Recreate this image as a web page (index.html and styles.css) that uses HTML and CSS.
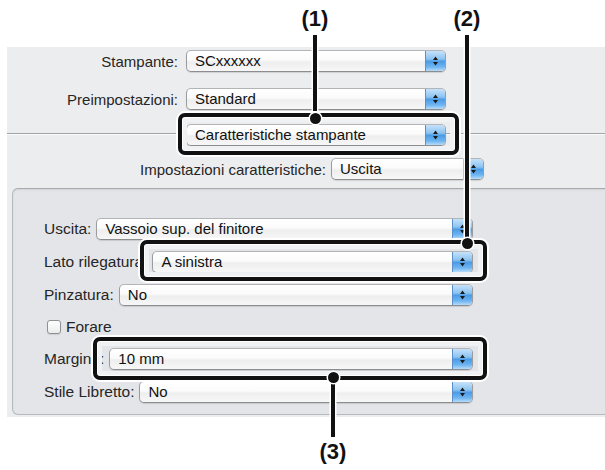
FILE: index.html
```html
<!DOCTYPE html>
<html>
  <head>
    <title>Stampa - Caratteristiche stampante</title>
    <link rel="stylesheet" href="styles.css">
  </head>
  <body>
    <div class="figure">
      <div class="dialog">
        <div class="top-field first">
          <span class="top-label">Stampante:</span>
          <div class="popup top-popup">
            <span class="popup-text">SCxxxxxx</span>
            <span class="stepper"><svg viewBox="0 0 19 20" width="19" height="20"><path d="M9.5 5.5 L12 9 L7 9 Z M7 11 L12 11 L9.5 14.5 Z"/></svg></span>
          </div>
        </div>
        <div class="top-field">
          <span class="top-label">Preimpostazioni:</span>
          <div class="popup top-popup">
            <span class="popup-text">Standard</span>
            <span class="stepper"><svg viewBox="0 0 19 20" width="19" height="20"><path d="M9.5 5.5 L12 9 L7 9 Z M7 11 L12 11 L9.5 14.5 Z"/></svg></span>
          </div>
        </div>
        <div class="top-field separator-row">
          <span class="top-label"></span>
          <div class="popup top-popup">
            <span class="popup-text">Caratteristiche stampante</span>
            <span class="stepper"><svg viewBox="0 0 19 20" width="19" height="20"><path d="M9.5 5.5 L12 9 L7 9 Z M7 11 L12 11 L9.5 14.5 Z"/></svg></span>
          </div>
        </div>
        <div class="feature-field">
          <span class="feature-label">Impostazioni caratteristiche:</span>
          <div class="popup feature-popup">
            <span class="popup-text">Uscita</span>
            <span class="stepper"><svg viewBox="0 0 19 20" width="19" height="20"><path d="M9.5 5.5 L12 9 L7 9 Z M7 11 L12 11 L9.5 14.5 Z"/></svg></span>
          </div>
        </div>

        <div class="group">
          <div class="row">
            <span class="row-label">Uscita:</span>
            <div class="popup">
              <span class="popup-text">Vassoio sup. del finitore</span>
              <span class="stepper"><svg viewBox="0 0 19 20" width="19" height="20"><path d="M9.5 5.5 L12 9 L7 9 Z M7 11 L12 11 L9.5 14.5 Z"/></svg></span>
            </div>
          </div>
          <div class="row">
            <span class="row-label">Lato rilegatura:</span>
            <div class="popup">
              <span class="popup-text">A sinistra</span>
              <span class="stepper"><svg viewBox="0 0 19 20" width="19" height="20"><path d="M9.5 5.5 L12 9 L7 9 Z M7 11 L12 11 L9.5 14.5 Z"/></svg></span>
            </div>
          </div>
          <div class="row">
            <span class="row-label">Pinzatura:</span>
            <div class="popup">
              <span class="popup-text">No</span>
              <span class="stepper"><svg viewBox="0 0 19 20" width="19" height="20"><path d="M9.5 5.5 L12 9 L7 9 Z M7 11 L12 11 L9.5 14.5 Z"/></svg></span>
            </div>
          </div>
          <label class="row check-row">
            <span class="checkbox"></span>
            <span class="row-label">Forare</span>
          </label>
          <div class="row">
            <span class="row-label">Margine:</span>
            <div class="popup">
              <span class="popup-text">10 mm</span>
              <span class="stepper"><svg viewBox="0 0 19 20" width="19" height="20"><path d="M9.5 5.5 L12 9 L7 9 Z M7 11 L12 11 L9.5 14.5 Z"/></svg></span>
            </div>
          </div>
          <div class="row">
            <span class="row-label">Stile Libretto:</span>
            <div class="popup">
              <span class="popup-text">No</span>
              <span class="stepper"><svg viewBox="0 0 19 20" width="19" height="20"><path d="M9.5 5.5 L12 9 L7 9 Z M7 11 L12 11 L9.5 14.5 Z"/></svg></span>
            </div>
          </div>
        </div>
      </div>

      <!-- callouts drawn over the dialog -->
      <span class="callout-num num-1">(1)</span>
      <span class="callout-num num-2">(2)</span>
      <span class="callout-num num-3">(3)</span>
      <span class="leader leader-1"></span>
      <span class="leader leader-2"></span>
      <span class="leader leader-3"></span>
      <span class="frame frame-1"></span>
      <span class="frame frame-2"></span>
      <span class="frame frame-3"></span>
      <span class="dot dot-1"></span>
      <span class="dot dot-2"></span>
      <span class="dot dot-3"></span>
    </div>
  </body>
</html>
```

FILE: styles.css
```css
/* Mac print dialog, "Caratteristiche stampante" pane */
body {
  margin: 0;
  background: #fff;
  font-family: "Liberation Sans", Arial, sans-serif;
  font-size: 15px;
  color: #1a1a1a;
}
.figure {
  position: relative;
  width: 605px;
  height: 470px;
  overflow: hidden;
}
.dialog {
  margin: 47px 0 0 7px;
  width: 598px;
  height: 370px;
  padding-top: 3px;
  box-sizing: border-box;
  background: #ecedef;
  overflow: hidden;
}

/* top part */
.top-field {
  display: flex;
  align-items: center;
  gap: 8px;
  height: 22px;
  margin-top: 16px;
}
.top-field.first {
  margin-top: 0;
}
.top-label {
  width: 171px;
  text-align: right;
  color: #262626;
}
.top-popup {
  width: 260px;
}
.separator-row {
  margin-top: 13px;
  height: 23px;
  background: linear-gradient(to bottom, transparent 10px, #a2a3a5 10px, #a2a3a5 11px, #fbfbfb 11px, #fbfbfb 12px, transparent 12px);
}
.feature-field {
  display: flex;
  align-items: center;
  gap: 5px;
  height: 22px;
  margin-top: 12px;
}
.feature-label {
  width: 319px;
  text-align: right;
  color: #262626;
}
.feature-popup {
  width: 153px;
}

/* popup buttons */
.popup {
  display: flex;
  align-items: stretch;
  height: 22px;
  box-sizing: border-box;
  border: 1px solid #9b9c9e;
  border-top-color: #b3b4b6;
  border-bottom-color: #8c8d8f;
  border-radius: 5px;
  overflow: hidden;
  background: linear-gradient(to bottom, #ffffff 0%, #fbfbfb 45%, #eeeeee 55%, #f7f7f7 100%);
  box-shadow: 0 1px 1px rgba(0, 0, 0, 0.12);
}
.popup-text {
  flex: 1;
  padding-left: 8px;
  line-height: 20px;
  color: #111;
  white-space: nowrap;
}
.stepper {
  width: 19px;
  border-left: 1px solid #5b8fc9;
  background: linear-gradient(to bottom, #c6e2fa 0%, #8cc3f1 40%, #4b9be6 52%, #6fb5f1 80%, #b6dcfb 100%);
}
.stepper svg {
  display: block;
  fill: #1b1b1b;
}

/* group box */
.group {
  margin: 8px 0 0 5px;
  width: 620px;
  height: 227px;
  box-sizing: border-box;
  padding: 29px 0 0 31px;
  border: 1px solid #b8b9bb;
  border-top-color: #a9aaac;
  border-radius: 6px;
  background: #e4e5e8;
  box-shadow: inset 0 1px 2px rgba(0, 0, 0, 0.08);
  display: flex;
  flex-direction: column;
  gap: 11px;
}
.row {
  display: flex;
  align-items: center;
  gap: 5px;
  width: 429px;
  height: 22px;
}
.row .popup {
  flex: 1;
}
.row-label {
  font-size: 15.5px;
  color: #262626;
  white-space: nowrap;
}
.check-row {
  height: 20px;
  padding-left: 3px;
}
.checkbox {
  width: 14px;
  height: 14px;
  box-sizing: border-box;
  border: 1px solid #8f9092;
  border-radius: 3px;
  background: linear-gradient(to bottom, #ffffff, #ececec);
  box-shadow: 0 1px 1px rgba(0, 0, 0, 0.1);
}

/* callouts */
.callout-num {
  position: absolute;
  width: 40px;
  text-align: center;
  font-family: "Liberation Sans", Arial, sans-serif;
  font-weight: bold;
  font-size: 22px;
  line-height: 26px;
  color: #111;
}
.num-1 { left: 295px; top: 6px; }
.num-2 { left: 447px; top: 6px; }
.num-3 { left: 313px; top: 439px; }

.leader {
  position: absolute;
  width: 4px;
  background: #111;
  box-shadow: 0 0 0 1.5px #fff;
}
.leader-1 { left: 313px; top: 35px; height: 80px; }
.leader-2 { left: 465px; top: 35px; height: 205px; }
.leader-3 { left: 331px; top: 380px; height: 57px; }

.frame {
  position: absolute;
  box-sizing: border-box;
  border: 4px solid #111;
  border-radius: 7px;
  box-shadow: 0 0 0 2px #fff, inset 0 0 0 1px #fff, inset 0 0 0 5px rgba(240, 241, 243, 0.96);
}
.frame-1 { left: 178px; top: 113px; width: 281px; height: 42px; }
.frame-2 { left: 140px; top: 240px; width: 347px; height: 41px; }
.frame-3 { left: 93px; top: 337px; width: 394px; height: 43px; }

.dot {
  position: absolute;
  width: 11px;
  height: 11px;
  border-radius: 50%;
  background: #111;
  box-shadow: 0 0 0 1.5px #fff;
}
.dot-1 { left: 309.5px; top: 112.5px; }
.dot-2 { left: 461.5px; top: 237.5px; }
.dot-3 { left: 327.5px; top: 371.5px; }
```
